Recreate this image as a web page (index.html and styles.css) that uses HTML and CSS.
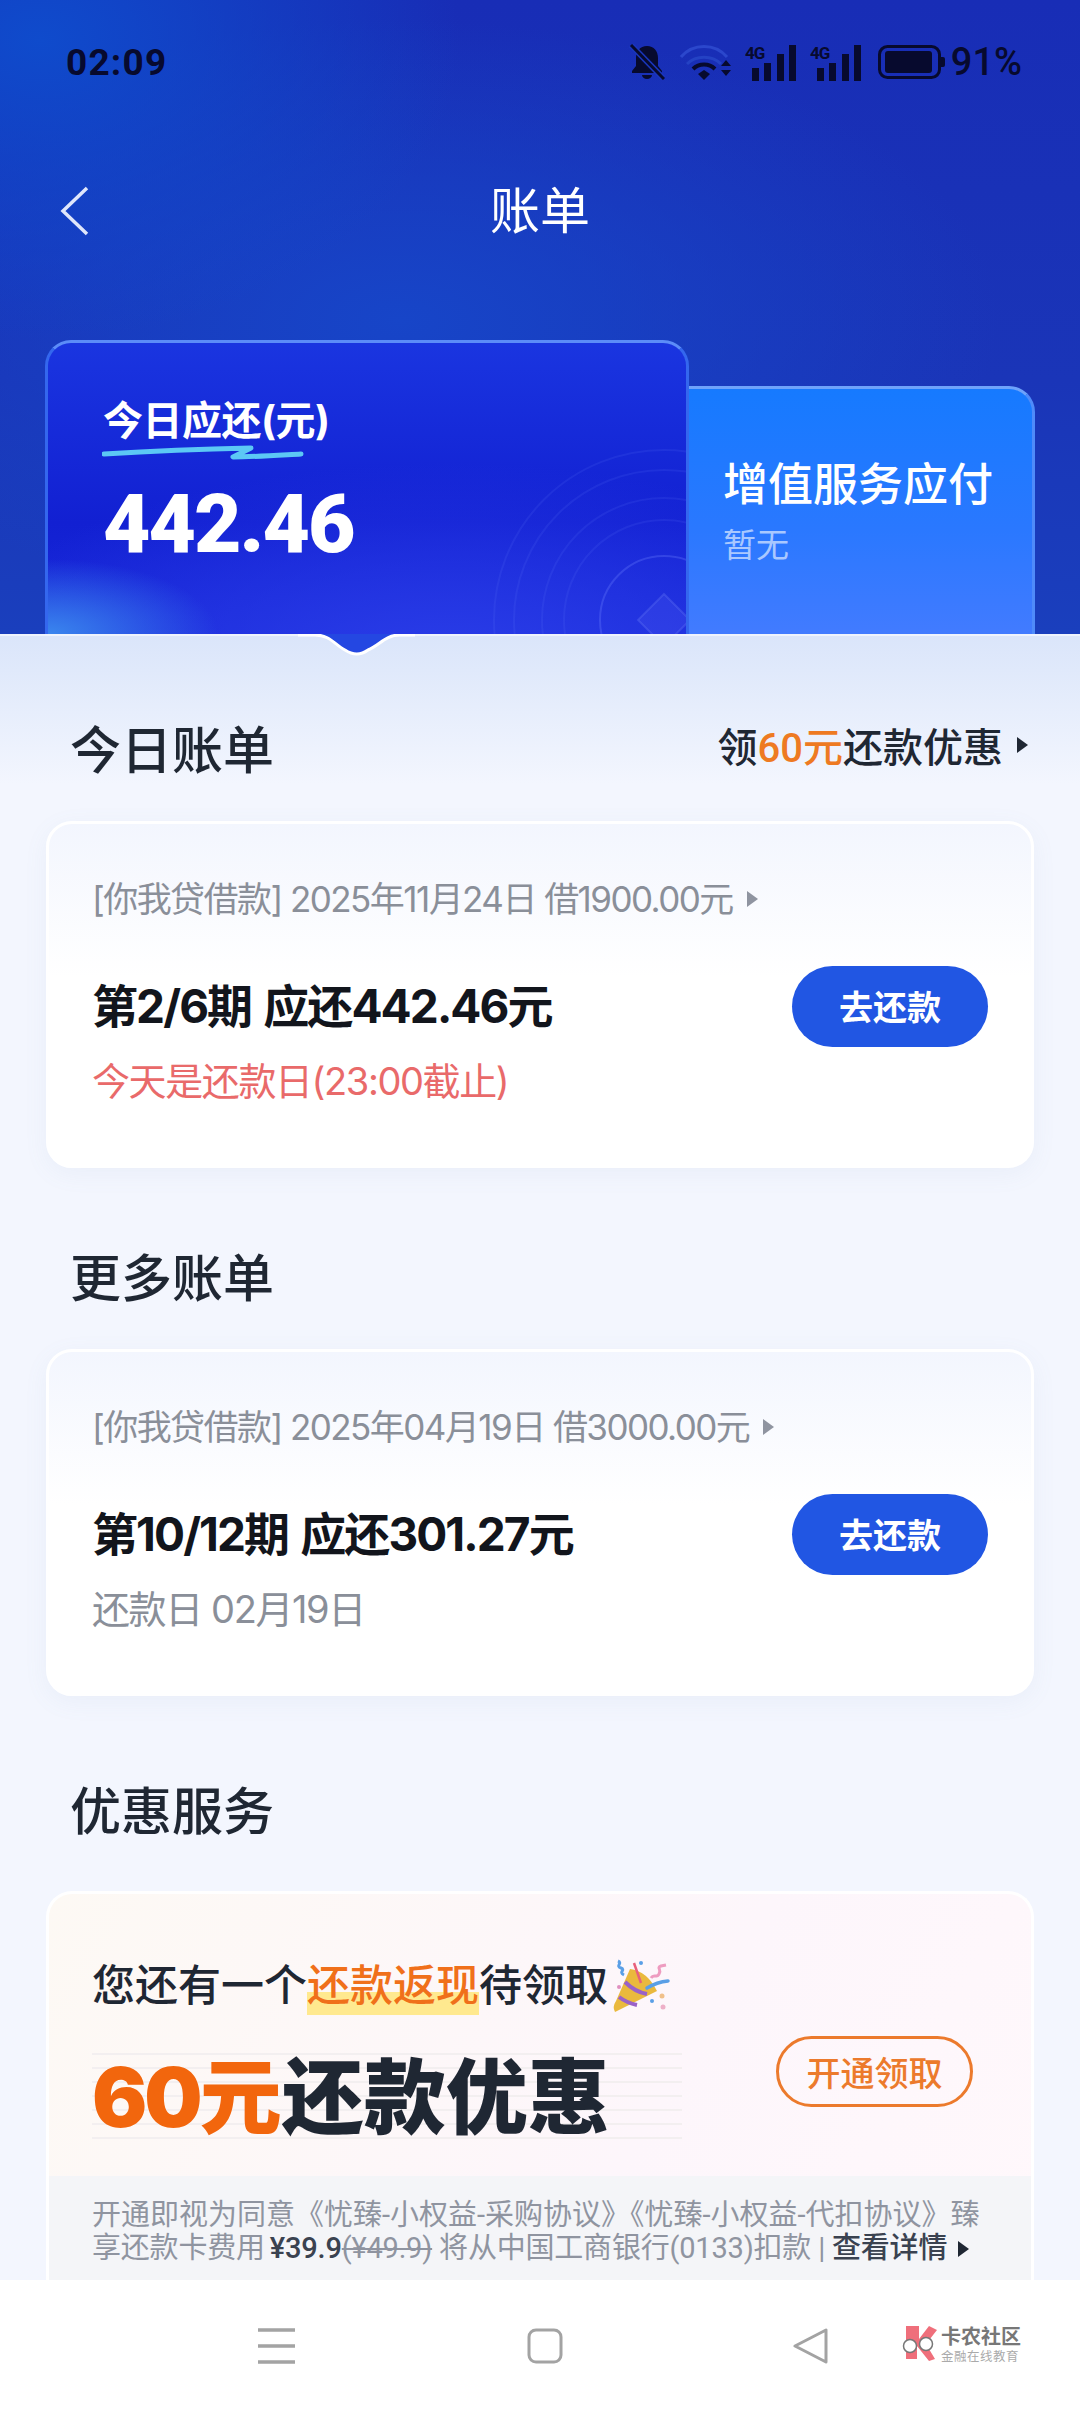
FILE: index.html
```html
<!DOCTYPE html>
<html>
<head>
<meta charset="utf-8">
<title>账单</title>
<link rel="stylesheet" href="styles.css">
</head>
<body>
<div class="screen">

<!-- blue header -->
<div class="hero">
  <div class="status">
    <span class="time">02:09</span>
    <div class="status-icons">
      <svg class="ic-bell" width="36" height="36" viewBox="0 0 36 36">
        <path d="M18 2c-7 0-11 5-11 12v8l-4 5v2h30v-2l-4-5v-8c0-7-4-12-11-12z" fill="#070a2e"/>
        <path d="M13 31a5 4 0 0 0 10 0z" fill="#070a2e"/>
        <path d="M2 1l32 33" stroke="#1a36bd" stroke-width="6"/>
        <path d="M2 1l33 34" stroke="#070a2e" stroke-width="3"/>
      </svg>
      <svg class="ic-wifi" width="51" height="36" viewBox="0 0 51 36">
        <path d="M1 13c12-14 34-14 46 0" fill="none" stroke="#2b47cc" stroke-width="3"/>
        <path d="M7 20c9-9 25-9 34 0" fill="none" stroke="#2442c4" stroke-width="3"/>
        <path d="M13 25c6-6 16-6 22 0" fill="none" stroke="#070a2e" stroke-width="4"/>
        <path d="M18 30l6-4 6 4-6 6z" fill="#070a2e"/>
        <path d="M41 22l5-6 5 6zM41 26h10l-5 6z" fill="#070a2e"/>
      </svg>
      <svg class="ic-signal" width="51" height="37" viewBox="0 0 51 37">
        <text x="0" y="15" class="sig-text">4G</text>
        <rect x="7" y="24" width="7" height="13"/>
        <rect x="19" y="19" width="7" height="18"/>
        <rect x="32" y="10" width="7" height="27"/>
        <rect x="44" y="1" width="7" height="36"/>
      </svg>
      <svg class="ic-signal" width="51" height="37" viewBox="0 0 51 37">
        <text x="0" y="15" class="sig-text">4G</text>
        <rect x="7" y="24" width="7" height="13"/>
        <rect x="19" y="19" width="7" height="18"/>
        <rect x="32" y="10" width="7" height="27"/>
        <rect x="44" y="1" width="7" height="36"/>
      </svg>
      <svg class="ic-batt" width="67" height="34" viewBox="0 0 67 34">
        <rect x="1.5" y="1.5" width="60" height="31" rx="8" fill="none" stroke="#070a2e" stroke-width="3"/>
        <rect x="7" y="6" width="47" height="22" rx="3" fill="#070a2e"/>
        <path d="M63 12h2a2 2 0 0 1 2 2v6a2 2 0 0 1-2 2h-2z" fill="#070a2e"/>
      </svg>
      <span class="batt-text">91%</span>
    </div>
  </div>

  <div class="topnav">
    <svg class="back" width="30" height="50" viewBox="0 0 30 50">
      <path d="M27 2L3 25l24 23" fill="none" stroke="#dfe6fb" stroke-width="3.5"/>
    </svg>
    <span class="page-title">账单</span>
  </div>

  <div class="hero-cards">
    <div class="due-card">
      <svg class="rings" width="400" height="330" viewBox="0 0 400 330">
        <circle cx="378" cy="277" r="64" class="ring-in"/>
        <circle cx="378" cy="277" r="100" />
        <circle cx="378" cy="277" r="122" />
        <circle cx="378" cy="277" r="150" />
        <circle cx="378" cy="277" r="170" />
        <path d="M378 251l26 26-26 26-26-26z" class="ring-gem"/>
      </svg>
      <div class="due-label">今日应还(元)</div>
      <svg class="squiggle" width="204" height="18" viewBox="0 0 204 18">
        <path d="M2 10C50 7 100 5 149 4L131 13C150 13 180 11 199 10" fill="none" stroke="#5cc8f5" stroke-width="5" stroke-linecap="round" stroke-linejoin="round"/>
      </svg>
      <div class="due-amount">442.46</div>
    </div>
    <div class="service-card">
      <div class="service-title">增值服务应付</div>
      <div class="service-sub">暂无</div>
    </div>
  </div>
</div>

<!-- scrolling sheet -->
<div class="sheet">
  <svg class="notch" width="121" height="26" viewBox="0 0 121 26">
    <path d="M19 0C34 0 39 11 49 16Q61 24 72 16C84 11 89 0 104 0z" fill="#2447e2"/>
    <path d="M2 1H19C34 1 39 11 49 16Q61 24 72 16C84 11 89 1 104 1H119" fill="none" stroke="#fff" stroke-width="3"/>
  </svg>

  <div class="sec-head">
    <h2 class="sec-title">今日账单</h2>
    <div class="sec-link">领<span class="orange">60元</span>还款优惠<i class="tri tri-dark"></i></div>
  </div>
  <div class="bill-card">
    <div class="bill-meta">[你我贷借款] 2025年11月24日 借1900.00元<i class="tri tri-grey"></i></div>
    <div class="bill-row">
      <div class="bill-title">第2/6期 应还442.46元</div>
      <div class="pay-btn">去还款</div>
    </div>
    <div class="bill-due red">今天是还款日(23:00截止)</div>
  </div>

  <div class="sec-head sec-more">
    <h2 class="sec-title">更多账单</h2>
  </div>
  <div class="bill-card">
    <div class="bill-meta">[你我贷借款] 2025年04月19日 借3000.00元<i class="tri tri-grey"></i></div>
    <div class="bill-row">
      <div class="bill-title">第10/12期 应还301.27元</div>
      <div class="pay-btn">去还款</div>
    </div>
    <div class="bill-due">还款日 02月19日</div>
  </div>

  <div class="sec-head sec-promo">
    <h2 class="sec-title">优惠服务</h2>
  </div>
  <div class="promo-card">
    <div class="promo-main">
      <div class="promo-left">
        <div class="promo-head">您还有一个<span class="hl">还款返现</span>待领取
          <svg class="popper" width="70" height="56" viewBox="0 0 70 56">
            <path d="M10 55Q7 50 11 44L25 12Q42 14 52 34z" fill="#eab93d"/>
            <path d="M20 25Q30 35 42 37M14 40Q22 46 32 48" fill="none" stroke="#9a62c8" stroke-width="4"/>
            <path d="M42 31Q52 25 63 24" fill="none" stroke="#5a9fe6" stroke-width="3.5" stroke-linecap="round"/>
            <path d="M13 4c5 2-3 5 3 7c5 2-3 4 3 7" fill="none" stroke="#5a9fe6" stroke-width="3"/>
            <path d="M29 6l7 20" fill="none" stroke="#e8607a" stroke-width="2.5"/>
            <path d="M46 21c3-5 6 1 8-4c3-5-3-6 2-8l5-1" fill="none" stroke="#ee9cc0" stroke-width="3"/>
            <circle cx="36" cy="6" r="2" fill="#5a9fe6"/>
            <circle cx="14" cy="30" r="2" fill="#e090c0"/>
            <circle cx="57" cy="39" r="2.5" fill="#f0c08a"/>
            <circle cx="47" cy="44" r="2" fill="#5a9fe6"/>
            <circle cx="58" cy="50" r="2.5" fill="#eeb0c8"/>
          </svg>
        </div>
        <div class="promo-title"><span class="promo-num">60元</span>还款优惠</div>
      </div>
      <div class="open-btn">开通领取</div>
    </div>
    <div class="promo-foot">
      <div>开通即视为同意《忧臻-小权益-采购协议》《忧臻-小权益-代扣协议》臻</div>
      <div class="foot-second">享还款卡费用 <b class="price">¥39.9</b><s>(¥49.9)</s> 将从中国工商银行(0133)扣款 | <span class="detail">查看详情</span><i class="tri tri-dark tri-small"></i></div>
    </div>
  </div>
</div>

<!-- system nav -->
<div class="navbar">
  <svg class="nav-menu" width="37" height="36" viewBox="0 0 37 36">
    <path d="M0 2h37M0 18h37M0 34h37" stroke="#a3a3a3" stroke-width="3.5"/>
  </svg>
  <svg class="nav-home" width="36" height="36" viewBox="0 0 36 36">
    <rect x="2" y="2" width="32" height="32" rx="7" fill="none" stroke="#a3a3a3" stroke-width="3"/>
  </svg>
  <svg class="nav-back" width="36" height="36" viewBox="0 0 36 36">
    <path d="M33 2v32L2 18z" fill="none" stroke="#a3a3a3" stroke-width="3" stroke-linejoin="round"/>
  </svg>
  <div class="logo">
    <svg width="36" height="36" viewBox="0 0 36 36">
      <path d="M5 1h13v13L28 1l8 4-11 14 9 15-6 2-12-15v13H5z" fill="#ef6f7b"/>
      <circle cx="9" cy="21" r="6.5" fill="#fff" stroke="#777" stroke-width="1.5"/>
      <circle cx="25" cy="19" r="6.5" fill="#fff" stroke="#777" stroke-width="1.5"/>
    </svg>
    <div class="logo-text">
      <div class="logo-name">卡农社区</div>
      <div class="logo-sub">金融在线教育</div>
    </div>
  </div>
</div>

</div>
</body>
</html>
```

FILE: styles.css
```css
* {
    box-sizing: border-box;
}
html, body {
    margin: 0;
    padding: 0;
    background: #f3f6fe;
}
body {
    font-family: Inter, "Noto Sans CJK SC", sans-serif;
    color: #1f2733;
}
.screen {
    width: 1080px;
    height: 2412px;
    display: flex;
    flex-direction: column;
    overflow: hidden;
}

/* header */
.hero {
    height: 634px;
    flex: none;
    overflow: hidden;
    background:
        radial-gradient(420px 300px at 40px 40px, #0f4bcc 0%, rgba(15,75,204,0) 100%),
        radial-gradient(600px 300px at 400px 320px, #1745c8 0%, rgba(23,69,200,0) 100%),
        linear-gradient(180deg, #182db6 0%, #1a35b8 60%, #1a3fbd 100%);
}
.status {
    height: 124px;
    padding: 0 58px 0 66px;
    display: flex;
    align-items: center;
    justify-content: space-between;
    color: #070a2e;
}
.time {
    font-family: Roboto, sans-serif;
    font-size: 37px;
    font-weight: 700;
    letter-spacing: 1.2px;
}
.status-icons {
    display: flex;
    align-items: center;
    gap: 14px;
}
.status-icons svg {
    display: block;
}
.ic-wifi {
    margin-left: 1px;
}
.ic-batt {
    margin-left: 3px;
}
.batt-text {
    font-family: Roboto, sans-serif;
    font-size: 38px;
    font-weight: 500;
    margin-left: -8px;
}
.ic-signal rect {
    fill: #070a2e;
}
.sig-text {
    font-family: Roboto, sans-serif;
    font-size: 17px;
    font-weight: 700;
    fill: #070a2e;
    letter-spacing: -1px;
}
.topnav {
    height: 174px;
    position: relative;
    display: flex;
    align-items: center;
    justify-content: center;
}
.back {
    position: absolute;
    left: 60px;
    top: 62px;
}
.page-title {
    color: #fff;
    font-size: 50px;
    margin-top: -8px;
}
.hero-cards {
    display: flex;
    padding: 42px 45px 0;
}
.due-card {
    width: 644px;
    height: 330px;
    flex: none;
    position: relative;
    overflow: hidden;
    border: 3px solid #3467ee;
    border-top-color: #5c8cf8;
    border-bottom: 0;
    border-radius: 26px 26px 0 0;
    padding: 53px 0 0 55px;
    background:
        radial-gradient(170px 75px at 0 291px, #3a86ee 0%, rgba(58,134,238,0) 100%),
        radial-gradient(500px 200px at 400px 320px, #2a3de8 0%, rgba(42,61,232,0) 100%),
        linear-gradient(180deg, #1a35e0 0%, #1220d2 55%, #1c2cdc 100%);
    color: #fff;
}
.rings {
    position: absolute;
    left: 238px;
    top: 0;
}
.rings circle {
    fill: none;
    stroke: rgba(110,130,255,.12);
    stroke-width: 2;
}
.rings .ring-in {
    stroke: rgba(110,130,255,.3);
}
.rings .ring-gem {
    fill: rgba(110,130,255,.14);
    stroke: rgba(130,150,255,.22);
    stroke-width: 2;
}
.due-label {
    font-size: 40px;
    font-weight: 700;
    line-height: 50px;
    letter-spacing: -.5px;
}
.squiggle {
    position: absolute;
    left: 54px;
    top: 101px;
}
.due-amount {
    font-family: Roboto, sans-serif;
    font-size: 82px;
    font-weight: 900;
    line-height: 90px;
    margin-top: 33px;
    position: relative;
    letter-spacing: -2px;
}
.service-card {
    flex: 1;
    height: 284px;
    margin-top: 46px;
    border: 3px solid #4f8bfa;
    border-top-color: #6ea3fb;
    border-left: 0;
    border-bottom: 0;
    border-radius: 0 26px 0 0;
    padding: 66px 0 0 34px;
    color: #fff;
    background: linear-gradient(180deg, #167aff 0%, #2a78ff 50%, #4a7cff 100%);
}
.service-title {
    font-size: 45px;
    font-weight: 500;
    line-height: 60px;
}
.service-sub {
    font-size: 33px;
    line-height: 44px;
    margin-top: 8px;
    color: rgba(255,255,255,.6);
}

/* sheet */
.sheet {
    flex: 1;
    min-height: 0;
    position: relative;
    overflow: hidden;
    padding: 80px 46px 0;
    background:
        linear-gradient(#eef3fd 0, #eef3fd 2px, transparent 2px),
        linear-gradient(180deg, #dae5fa 0, #f3f6fe 150px);
}
.notch {
    position: absolute;
    left: 296px;
    top: 0;
}
.sec-head {
    height: 60px;
    padding: 0 6px 0 24px;
    display: flex;
    align-items: center;
    justify-content: space-between;
}
.sec-more {
    margin-top: 74px;
}
.sec-promo {
    margin-top: 79px;
}
.sec-title {
    margin: 6px 0 0;
    font-size: 51px;
    font-weight: 500;
    color: #1f2733;
}
.sec-link {
    font-family: Roboto, "Noto Sans CJK SC", sans-serif;
    font-size: 40px;
    font-weight: 500;
    display: flex;
    align-items: center;
    padding-top: 2px;
}
.orange {
    color: #ee7a22;
}
.tri {
    display: inline-block;
    width: 0;
    height: 0;
    border-style: solid;
    border-color: transparent;
    border-width: 8px 0 8px 11px;
    margin-left: 14px;
}
.tri-dark {
    border-left-color: #1f2733;
}
.tri-grey {
    border-left-color: #8f94a0;
}
.tri-small {
    margin-left: 11px;
}
.bill-card {
    margin-top: 47px;
    height: 347px;
    border: 3px solid #fff;
    border-radius: 26px;
    padding: 53px 43px 0;
    background: linear-gradient(180deg, #f3f6fe 0%, #fff 45%);
    box-shadow: 0 6px 24px rgba(120,140,190,.07);
}
.bill-meta {
    font-size: 35px;
    line-height: 44px;
    color: #8a8f99;
    letter-spacing: -1.55px;
    display: flex;
    align-items: center;
}
.bill-row {
    margin-top: 45px;
    display: flex;
    align-items: center;
    justify-content: space-between;
}
.bill-title {
    font-size: 46px;
    font-weight: 700;
    color: #12151c;
    letter-spacing: -1.9px;
    word-spacing: 3px;
    padding-bottom: 8px;
}
.pay-btn {
    width: 196px;
    height: 81px;
    padding-bottom: 2px;
    border-radius: 41px;
    background: #2156e3;
    color: #fff;
    font-size: 34px;
    font-weight: 700;
    display: flex;
    align-items: center;
    justify-content: center;
}
.bill-due {
    margin-top: 9px;
    font-size: 38px;
    line-height: 50px;
    color: #8a8f99;
    letter-spacing: -1.4px;
}
.bill-due.red {
    color: #e96a6a;
}

/* promo */
.promo-card {
    margin-top: 56px;
    border: 3px solid #fff;
    border-bottom: 0;
    border-radius: 26px 26px 0 0;
    background: linear-gradient(120deg, #fdf9f4 0%, #fdf6fb 60%, #fff8fb 100%);
}
.promo-main {
    display: flex;
    justify-content: space-between;
    align-items: center;
    padding: 61px 58px 33px 43px;
}
.promo-head {
    font-size: 43px;
    font-weight: 500;
    line-height: 60px;
    height: 60px;
    display: flex;
    align-items: center;
}
.hl {
    color: #f0701a;
    background: linear-gradient(180deg, rgba(255,233,143,0) 62%, #ffe98f 62%);
}
.popper {
    margin-left: -3px;
    flex: none;
}
.promo-title {
    margin-top: 38px;
    width: 590px;
    height: 90px;
    font-size: 82px;
    font-weight: 900;
    line-height: 90px;
    white-space: nowrap;
    background: repeating-linear-gradient(180deg, #f3eff0 0, #f3eff0 2px, transparent 2px, transparent 14px);
}
.promo-num {
    color: #f2660d;
    letter-spacing: -3px;
    margin-right: 3px;
}
.open-btn {
    margin-top: 44px;
    width: 197px;
    height: 71px;
    border: 3px solid #ec7a2c;
    border-radius: 36px;
    color: #ec7a2c;
    font-size: 34px;
    font-weight: 500;
    display: flex;
    align-items: center;
    justify-content: center;
}
.promo-foot {
    font-family: Roboto, "Noto Sans CJK SC", sans-serif;
    background: #f4f5f8;
    padding: 23px 0 30px 43px;
    font-size: 29px;
    line-height: 33px;
    color: #8f94a0;
    white-space: nowrap;
}
.price, .detail {
    color: #3a4250;
    font-weight: 500;
}
.price {
    margin-left: -2px;
}
.promo-foot div {
    display: flex;
    align-items: center;
    white-space: pre;
}
.promo-foot .foot-second {
    letter-spacing: -.2px;
}

/* system nav */
.navbar {
    height: 132px;
    flex: none;
    background: #fff;
    display: flex;
    align-items: flex-start;
    padding: 48px 0 0 258px;
    position: relative;
    z-index: 2;
}
.nav-home {
    margin-left: 232px;
}
.nav-back {
    margin-left: 230px;
}
.logo {
    margin-left: 72px;
    margin-top: -3px;
    display: flex;
    gap: 4px;
}
.logo-name {
    font-size: 20px;
    font-weight: 700;
    line-height: 24px;
    color: #777;
}
.logo-sub {
    font-size: 12.5px;
    line-height: 16px;
    color: #aaa;
    letter-spacing: .5px;
}
```
